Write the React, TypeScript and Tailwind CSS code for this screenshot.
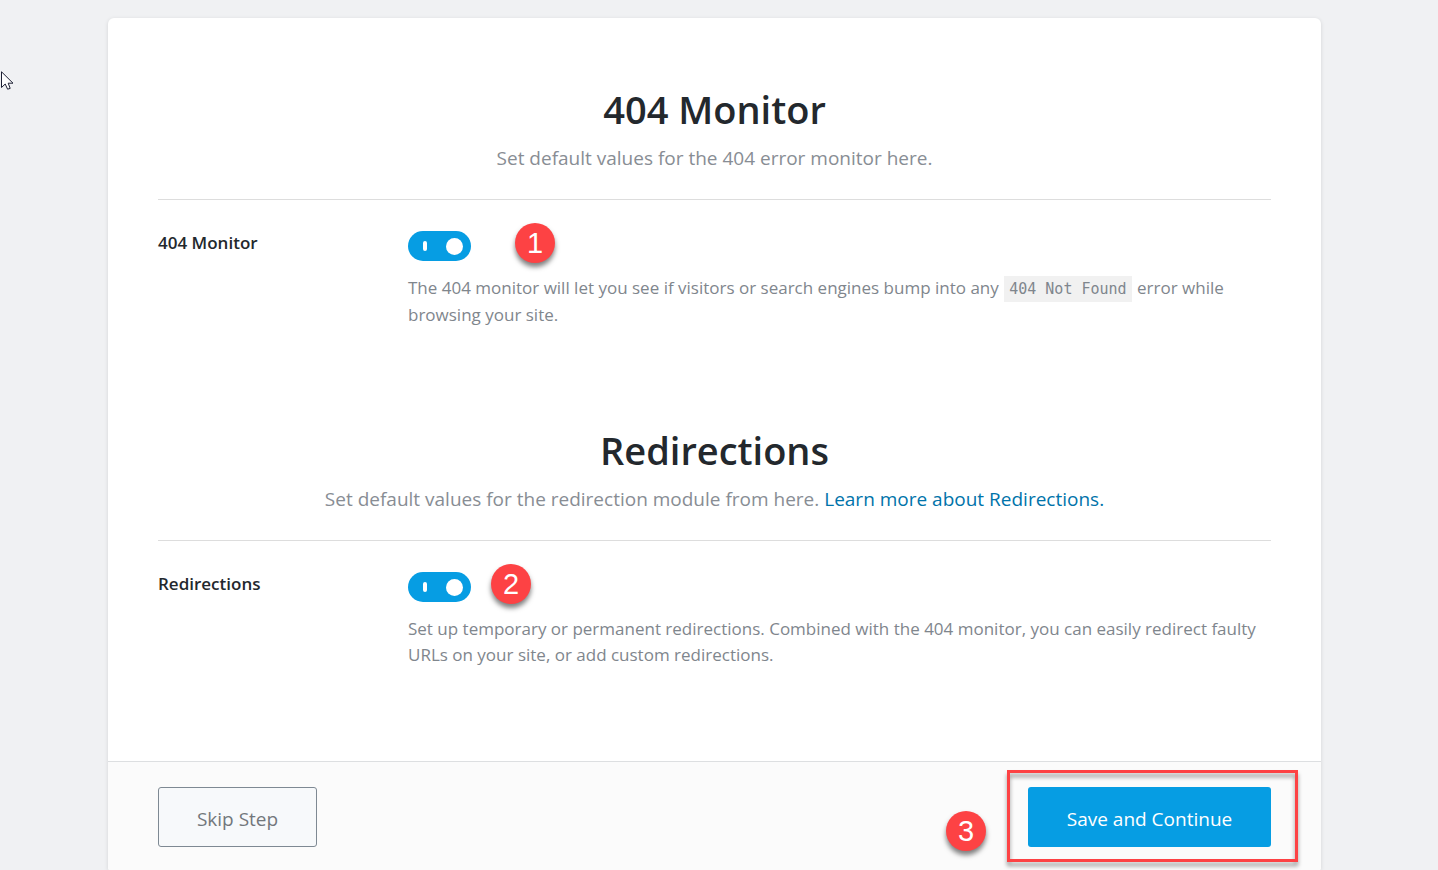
import { useState, type ReactNode } from "react";

function StepBadge({ value, className }: { value: number; className: string }) {
  return (
    <span
      className={`absolute flex size-10 items-center justify-center rounded-full bg-[#fd4244] font-['Liberation_Sans',sans-serif] text-[29px] leading-none text-white shadow-[0_4px_5px_rgba(0,0,0,0.5)] ${className}`}
    >
      {value}
    </span>
  );
}

function Toggle({ id }: { id: string }) {
  const [on, setOn] = useState(true);
  return (
    <span className="relative block h-[30px] w-[63px]">
      <input
        id={id}
        type="checkbox"
        role="switch"
        checked={on}
        onChange={() => setOn(!on)}
        className="peer block h-[30px] w-[63px] cursor-pointer appearance-none rounded-full bg-[#8c9aa8] checked:bg-[#069de3]"
      />
      <span className="pointer-events-none absolute top-[10px] left-[15px] h-[10px] w-1 rounded-xs bg-white opacity-0 peer-checked:opacity-100" />
      <span className="pointer-events-none absolute top-[7px] left-2 size-[17px] rounded-full bg-white peer-checked:left-[38px]" />
    </span>
  );
}

function Section({ title, intro, children }: { title: string; intro: ReactNode; children: ReactNode }) {
  return (
    <section className="pt-[61px]">
      <header className="border-b border-[#dddddd] pb-[26px] text-center">
        <h1 className="text-[38px] leading-[60px] font-semibold text-[#23282d]">{title}</h1>
        <p className="mt-1 text-[19px] leading-[30px] text-[#888d94]">{intro}</p>
      </header>
      {children}
    </section>
  );
}

function SettingRow({ id, label, badge, children }: { id: string; label: string; badge: ReactNode; children: ReactNode }) {
  return (
    <div className="flex pt-[31px]">
      <label htmlFor={id} className="w-[250px] shrink-0 text-[17px] leading-6 font-semibold text-[#23282d]">
        {label}
      </label>
      <div className="min-w-0 flex-1">
        <div className="relative">
          <Toggle id={id} />
          {badge}
        </div>
        <p className="mt-[14px] text-[17px] leading-[26px] text-[#7f868d]">{children}</p>
      </div>
    </div>
  );
}

function Cursor() {
  return (
    <svg className="pointer-events-none absolute top-[71px] left-[1px]" width="13" height="20" viewBox="0 0 13 20" aria-hidden="true">
      <path
        d="M.5 .8V16.5L4.2 13L6.6 18.2L9.2 17.4L7.2 12.2H12Z"
        fill="#fff"
        stroke="#1c1f33"
        strokeWidth="1"
      />
    </svg>
  );
}

export default function App() {
  return (
    <div className="relative min-h-screen bg-[#f0f1f3] pt-[18px] pr-[117px] pl-[108px] font-['Open_Sans',sans-serif]">
      <Cursor />
      <main className="rounded-t-md rounded-b-xs bg-white shadow-[0_1px_4px_rgba(0,0,0,0.12)]">
        <div className="px-[50px] pb-[93px]">
          <Section title="404 Monitor" intro="Set default values for the 404 error monitor here.">
            <SettingRow id="monitor" label="404 Monitor" badge={<StepBadge value={1} className="-top-2 left-[107px]" />}>
              The 404 monitor will let you see if visitors or search engines bump into any{" "}
              <code className="mx-px bg-[#f1f1f1] px-[5px] py-1 font-['DejaVu_Sans_Mono',monospace] text-[15px]">
                404 Not Found
              </code>{" "}
              error while browsing your site.
            </SettingRow>
          </Section>
          <div className="h-[31px]" />
          <Section
            title="Redirections"
            intro={
              <>
                Set default values for the redirection module from here.{" "}
                <a href="#redirections" className="text-[#0073aa]">
                  Learn more about Redirections.
                </a>
              </>
            }
          >
            <SettingRow id="redirections" label="Redirections" badge={<StepBadge value={2} className="-top-2 left-[83px]" />}>
              Set up temporary or permanent redirections. Combined with the 404 monitor, you can easily redirect faulty
              URLs on your site, or add custom redirections.
            </SettingRow>
          </Section>
        </div>
        <footer className="flex items-center justify-between rounded-b-xs border-t border-[#dddfe1] bg-[#fbfbfb] px-[50px] pt-[25px] pb-[23px] text-[19px]">
          <button
            type="button"
            className="h-[60px] w-[159px] rounded-[3px] border border-[#7e8993] bg-[#f7f9fb] pt-1 text-[#72777c]"
          >
            Skip Step
          </button>
          <div className="relative">
            <button type="button" className="h-[60px] w-[243px] rounded-[3px] bg-[#069de3] pt-1 text-white">
              Save and Continue
            </button>
            <span className="pointer-events-none absolute -top-[17px] -right-[27px] -bottom-[15px] -left-[21px] border-3 border-[#fd4244] drop-shadow-[0_4px_2px_rgba(0,0,0,0.4)]" />
            <StepBadge value={3} className="top-6 -left-[82px]" />
          </div>
        </footer>
      </main>
    </div>
  );
}
